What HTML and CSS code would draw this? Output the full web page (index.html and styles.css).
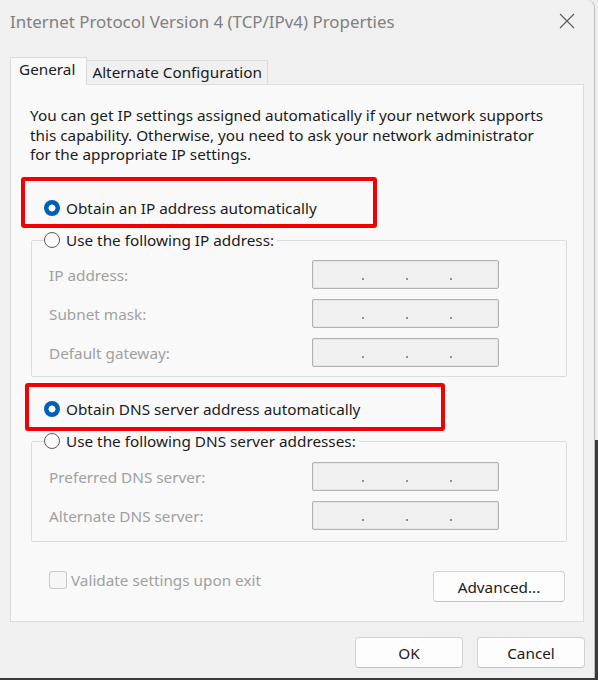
FILE: index.html
```html
<!DOCTYPE html>
<html lang="en">
<head>
<meta charset="utf-8">
<title>Internet Protocol Version 4 (TCP/IPv4) Properties</title>
<link rel="stylesheet" href="styles.css">
</head>
<body>
<div class="window">
  <div class="titlebar">
    <span class="title">Internet Protocol Version 4 (TCP/IPv4) Properties</span>
    <svg class="close" width="16" height="16" viewBox="0 0 16 16"><path d="M1 1 L15 15 M15 1 L1 15" stroke="#5a5a5a" stroke-width="1.1" fill="none"/></svg>
  </div>
  <div class="tabs">
    <div class="tab tab-active">General</div>
    <div class="tab">Alternate Configuration</div>
  </div>
  <div class="panel">
    <p class="desc">You can get IP settings assigned automatically if your network supports<br>this capability. Otherwise, you need to ask your network administrator<br>for the appropriate IP settings.</p>

    <div class="option option-first"><span class="radio radio-on"></span><span>Obtain an IP address automatically</span></div>

    <div class="group">
      <div class="group-head"><span class="radio"></span><span>Use the following IP address:</span></div>
      <div class="rows">
        <div class="row"><span class="label">IP address:</span><div class="ipfield"><i></i><i></i><i></i></div></div>
        <div class="row"><span class="label">Subnet mask:</span><div class="ipfield"><i></i><i></i><i></i></div></div>
        <div class="row"><span class="label">Default gateway:</span><div class="ipfield"><i></i><i></i><i></i></div></div>
      </div>
    </div>

    <div class="option option-dns"><span class="radio radio-on"></span><span>Obtain DNS server address automatically</span></div>

    <div class="group group-dns">
      <div class="group-head"><span class="radio"></span><span>Use the following DNS server addresses:</span></div>
      <div class="rows">
        <div class="row"><span class="label">Preferred DNS server:</span><div class="ipfield"><i></i><i></i><i></i></div></div>
        <div class="row"><span class="label">Alternate DNS server:</span><div class="ipfield"><i></i><i></i><i></i></div></div>
      </div>
    </div>

    <div class="bottom-row">
      <div class="check"><span class="checkbox"></span><span>Validate settings upon exit</span></div>
      <button class="btn btn-adv">Advanced...</button>
    </div>

    <div class="mark mark-ip"></div>
    <div class="mark mark-dns"></div>
  </div>
  <div class="actions">
    <button class="btn btn-dlg">OK</button>
    <button class="btn btn-dlg">Cancel</button>
  </div>
</div>
</body>
</html>
```
FILE: styles.css
```css
* { box-sizing: border-box; }
html, body { margin: 0; padding: 0; }
body {
  width: 598px;
  height: 680px;
  overflow: hidden;
  background: linear-gradient(#ececec 0 440px, #3a3a3a 440px);
  font-family: "Noto Sans", "Liberation Sans", sans-serif;
  font-size: 15.3px;
  color: #1b1b1b;
}
.window {
  width: 595px;
  height: 678px;
  background: #f0f0f0;
  border-right: 1px solid #bdbdbd;
  border-top-right-radius: 8px;
}
.titlebar {
  height: 42px;
  display: flex;
  align-items: center;
  justify-content: space-between;
  padding: 0 19px 0 10px;
}
.title {
  font-size: 16.9px;
  color: #808080;
}
.close { display: block; }
.tabs {
  display: flex;
  align-items: flex-end;
  margin: 15px 0 0 10px;
  height: 27px;
}
.tab {
  height: 24px;
  padding: 0 5px;
  border: 1px solid #dcdcdc;
  border-bottom: none;
  border-left: none;
  background: #f0f0f0;
  display: flex;
  align-items: center;
  line-height: 1;
}
.tab-active {
  height: 28px;
  margin-bottom: -1px;
  position: relative;
  z-index: 1;
  background: #f9f9f9;
  border-left: 1px solid #dcdcdc;
  padding: 0 11px 3px 8px;
}
.panel {
  position: relative;
  margin-left: 10px;
  width: 574px;
  height: 538px;
  background: #f9f9f9;
  border: 1px solid #dcdcdc;
  display: flex;
  flex-direction: column;
}
.desc {
  margin: 21px 10px 0 19px;
  line-height: 19.7px;
  white-space: nowrap;
}
.option {
  display: flex;
  align-items: center;
  height: 20px;
  margin-left: 33px;
  gap: 6px;
}
.option-first { margin-top: 33px; }
.option-dns { margin-top: 22px; }
.radio {
  width: 16px;
  height: 16px;
  border-radius: 50%;
  border: 1px solid #5c5c5c;
  background: #fbfbfb;
  flex: none;
}
.radio-on {
  border: none;
  background: radial-gradient(circle, #ffffff 0 3.2px, #005fb8 3.8px);
}
.group {
  margin: 22px 16px 0 20px;
  border: 1px solid #dcdcdc;
  border-radius: 2px;
  padding-bottom: 9px;
}
.group-head {
  display: flex;
  align-items: center;
  gap: 6px;
  height: 20px;
  width: fit-content;
  margin: -11px 0 0 12px;
  padding-right: 3px;
  background: #f9f9f9;
}
.rows {
  display: flex;
  flex-direction: column;
  gap: 10px;
  margin-top: 10px;
  padding-left: 17px;
}
.group-dns .rows { margin-top: 11px; }
.group-dns { padding-bottom: 11px; }
.row {
  display: flex;
  align-items: center;
  height: 29px;
}
.label {
  width: 263px;
  color: #a0a0a0;
}
.ipfield {
  width: 187px;
  height: 29px;
  border: 1px solid #b2b2b2;
  border-radius: 2px;
  box-shadow: inset 0 0 0 1px #e6e6e6;
  background: #f0f0f0;
  display: flex;
  align-items: flex-end;
  padding: 0 0 8px 49px;
  gap: 42px;
}
.ipfield i {
  display: block;
  width: 2px;
  height: 2px;
  background: #8a8fa0;
}
.bottom-row {
  display: flex;
  justify-content: space-between;
  align-items: flex-start;
  margin: 29px 18px 0 38px;
}
.check {
  display: flex;
  align-items: center;
  gap: 4px;
  color: #a0a0a0;
  height: 18px;
}
.checkbox {
  width: 18px;
  height: 18px;
  border: 1px solid #c8c8c8;
  border-radius: 3px;
  background: #f6f6f6;
}
.btn {
  font-family: inherit;
  font-size: 15.3px;
  color: #1b1b1b;
  background: #fdfdfd;
  border: 1px solid #d2d2d2;
  border-bottom-color: #c0c0c0;
  border-radius: 4px;
  padding: 0;
  display: flex;
  align-items: center;
  justify-content: center;
}
.btn-adv {
  width: 132px;
  height: 31px;
}
.actions {
  display: flex;
  justify-content: flex-end;
  gap: 14px;
  margin: 15px 9px 0 0;
}
.btn-dlg {
  width: 108px;
  height: 31px;
}
.mark {
  position: absolute;
  border: 4px solid #f20000;
  border-radius: 3px;
}
.mark-ip {
  left: 10px;
  top: 92px;
  width: 356px;
  height: 51px;
}
.mark-dns {
  left: 14px;
  top: 298px;
  width: 420px;
  height: 48px;
}
```
